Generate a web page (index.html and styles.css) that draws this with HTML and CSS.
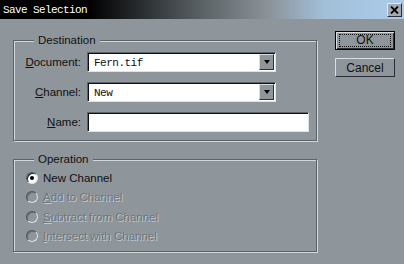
FILE: index.html
```html
<!DOCTYPE html>
<html lang="en">
<head>
    <meta charset="UTF-8">
    <meta name="viewport" content="width=device-width, initial-scale=1.0">
    <title>Save Selection</title>
    <link rel="stylesheet" href="styles.css">
</head>
<body>
    <div id="dialog">
        <header class="titlebar">
            <span class="title">Save Selection</span>
            <span class="close-btn">
                <svg width="9" height="8" viewBox="0 0 9 8">
                    <path d="M1 0.5 L8 7.5 M8 0.5 L1 7.5" stroke="#000" stroke-width="1.8"/>
                </svg>
            </span>
        </header>

        <div class="dialog-body">
            <div class="groups">
                <!-- Destination -->
                <div class="group dest-group">
                    <div class="group-title">Destination</div>
                    <div class="form-grid">
                        <label class="field-label"><u>D</u>ocument:</label>
                        <div class="select">
                            <span class="select-value">Fern.tif</span>
                            <span class="drop-btn"><span class="arrow"></span></span>
                        </div>

                        <label class="field-label"><u>C</u>hannel:</label>
                        <div class="select">
                            <span class="select-value">New</span>
                            <span class="drop-btn"><span class="arrow"></span></span>
                        </div>

                        <label class="field-label"><u>N</u>ame:</label>
                        <div class="text-input"></div>
                    </div>
                </div>

                <!-- Operation -->
                <div class="group op-group">
                    <div class="group-title">Operation</div>
                    <div class="radio-list">
                        <div class="radio-row">
                            <span class="radio checked"></span>
                            <span class="radio-text">New Channel</span>
                        </div>
                        <div class="radio-row disabled">
                            <span class="radio"></span>
                            <span class="radio-text"><u>A</u>dd to Channel</span>
                        </div>
                        <div class="radio-row disabled">
                            <span class="radio"></span>
                            <span class="radio-text"><u>S</u>ubtract from Channel</span>
                        </div>
                        <div class="radio-row disabled">
                            <span class="radio"></span>
                            <span class="radio-text"><u>I</u>ntersect with Channel</span>
                        </div>
                    </div>
                </div>
            </div>

            <div class="buttons">
                <div class="btn default"><span class="focus">OK</span></div>
                <div class="btn">Cancel</div>
            </div>
        </div>
    </div>
</body>
</html>
```

FILE: styles.css
```css
body {
    margin: 0;
    font-family: 'Liberation Sans', Arial, sans-serif;
    font-size: 11.5px;
    color: #111;
}

#dialog {
    width: 404px;
    height: 264px;
    background-color: #8e959b;
    overflow: hidden;
}

.titlebar {
    height: 19px;
    display: flex;
    align-items: center;
    justify-content: space-between;
    background: linear-gradient(to right, #000 0%, #000 22%, #33383b 38%, #5b6266 50%, #8a9197 66%, #a2bfd8 80%, #a9c9e6 95%);
}

.title {
    padding-left: 3px;
    color: #fff;
    font-family: 'Liberation Mono', monospace;
    font-size: 11px;
    letter-spacing: -0.6px;
}

.close-btn {
    width: 13px;
    height: 12px;
    margin-right: 2px;
    display: flex;
    align-items: center;
    justify-content: center;
    background-color: #a3a9ae;
    border: 1px solid;
    border-color: #e4e7ea #2b2f33 #2b2f33 #e4e7ea;
}

.dialog-body {
    display: flex;
    padding-left: 13px;
}

.groups {
    width: 304px;
    padding-top: 21px;
}

.group {
    border: 1px solid #5b6268;
    box-shadow: inset 1px 1px 0 #d3d8dc, 1px 1px 0 #d3d8dc;
}

.group-title {
    width: fit-content;
    margin: -8px 0 0 20px;
    padding: 0 4px;
    line-height: 14px;
    background-color: #8e959b;
}

.form-grid {
    display: grid;
    grid-template-columns: 67px auto;
    grid-auto-rows: 20px;
    column-gap: 6px;
    row-gap: 10px;
    margin-top: 5px;
    padding-bottom: 8px;
}

.field-label {
    text-align: right;
    line-height: 20px;
}

.select,
.text-input {
    display: flex;
    align-items: center;
    justify-content: space-between;
    background-color: #fff;
    border: 1px solid;
    border-color: #5b6268 #dfe3e6 #dfe3e6 #5b6268;
    box-shadow: inset 1px 1px 0 #111;
    box-sizing: border-box;
}

.select {
    width: 189px;
}

.text-input {
    width: 222px;
}

.select-value {
    padding-left: 6px;
    padding-top: 1px;
    font-family: 'Liberation Mono', monospace;
    font-size: 11px;
    letter-spacing: -0.5px;
}

.drop-btn {
    width: 15px;
    height: 16px;
    margin-right: 1px;
    display: flex;
    align-items: center;
    justify-content: center;
    background-color: #8e959b;
    border: 1px solid;
    border-color: #d9dde0 #2b2f33 #2b2f33 #d9dde0;
    box-sizing: border-box;
}

.arrow {
    width: 0;
    height: 0;
    border-left: 3.5px solid transparent;
    border-right: 3.5px solid transparent;
    border-top: 4px solid #000;
}

.op-group {
    margin-top: 18px;
}

.radio-list {
    padding: 2px 0 5px 12px;
}

.radio-row {
    height: 19.5px;
    display: flex;
    align-items: center;
    gap: 5px;
}

.radio {
    width: 10px;
    height: 10px;
    border-radius: 50%;
    border: 1px solid;
    border-color: #4e555b #dfe3e6 #dfe3e6 #4e555b;
    box-shadow: inset 1px 1px 0 #1d2124;
    background-color: #8e959b;
    display: flex;
    align-items: center;
    justify-content: center;
}

.radio.checked {
    background-color: #fff;
}

.radio.checked::after {
    content: '';
    width: 4px;
    height: 4px;
    border-radius: 50%;
    background-color: #000;
}

.radio-row.disabled .radio {
    box-shadow: inset 1px 1px 0 #6a7176;
}

.radio-row.disabled .radio-text {
    color: #6e757b;
    text-shadow: 1px 1px 0 #c4c9cd;
}

.buttons {
    display: flex;
    flex-direction: column;
    gap: 8px;
    margin-left: 18px;
    padding-top: 12px;
}

.btn {
    width: 60px;
    height: 19px;
    display: flex;
    align-items: center;
    justify-content: center;
    border: 1px solid;
    border-color: #dadee1 #2b2f33 #2b2f33 #dadee1;
    box-sizing: border-box;
    font-size: 12px;
}

.btn.default {
    border: 1px solid #000;
    box-shadow: inset 1px 1px 0 #dadee1, inset -1px -1px 0 #2b2f33;
}

.focus {
    width: 50px;
    height: 11px;
    line-height: 11px;
    text-align: center;
    border: 1px dotted #111;
}
```
